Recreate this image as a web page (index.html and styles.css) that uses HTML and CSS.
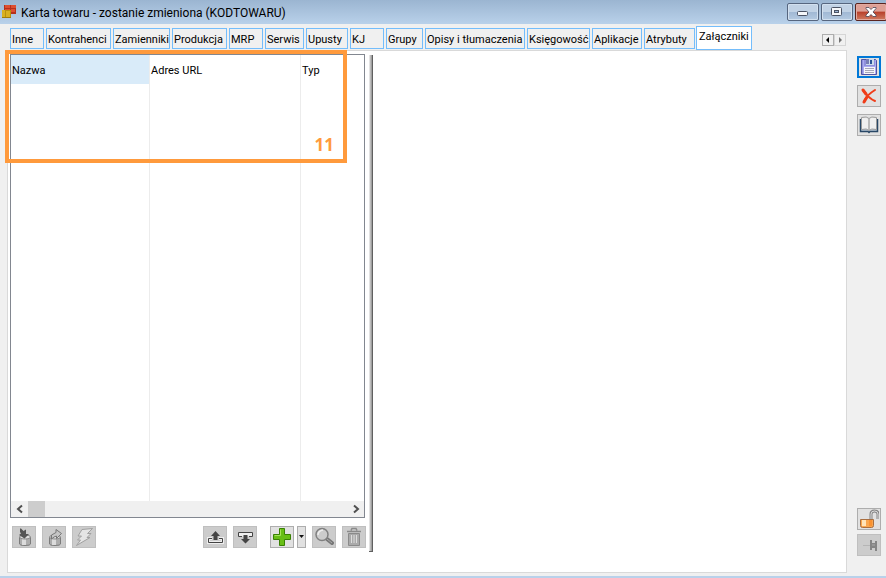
FILE: index.html
```html
<!DOCTYPE html>
<html lang="pl">
<head>
<meta charset="utf-8">
<title>Karta towaru</title>
<link rel="stylesheet" href="styles.css">
</head>
<body>
<div class="window">
  <header class="titlebar">
    <svg class="app-icon" width="16" height="16" viewBox="0 0 16 16" aria-hidden="true">
      <path d="M3 1h12v9H3z" fill="#b5301c"/><path d="M4 1h5v3H4zM10 1h5v3h-5zM4 5h5v3H4zM10 5h4v3h-4z" fill="#de4e30"/>
      <path d="M1 6h9v8H1z" fill="#b8900f"/><path d="M1 6h3v8H1zM5 7h4v7H5z" fill="#d8b020"/><path d="M1 13.500h9" stroke="#a07c08"/>
    </svg>
    <h1 class="title">Karta towaru - zostanie zmieniona (KODTOWARU)</h1>
    <div class="window-buttons">
      <button class="wbtn" aria-label="Minimalizuj"><svg width="12" height="12" viewBox="0 0 12 12"><rect x=".5" y="5.500" width="10" height="4" rx="1" fill="#f5f7fa" stroke="#4b5364"/></svg></button>
      <button class="wbtn" aria-label="Maksymalizuj"><svg width="12" height="12" viewBox="0 0 12 12"><rect x=".5" y="1.500" width="10" height="8" rx="1" fill="#f5f7fa" stroke="#4b5364"/><rect x="3.500" y="4.500" width="4" height="2" fill="#9db5d5" stroke="#4b5364"/></svg></button>
      <button class="wbtn close" aria-label="Zamknij"><svg width="12" height="12" viewBox="0 0 12 12"><path d="M1 1.500h3l2 2 2-2h3v1L8 6l3 3v1.500H8l-2-2-2 2H1V9l3-3-3-3.500z" fill="#fff" stroke="#4b4554" stroke-width=".8"/></svg></button>
    </div>
  </header>
  <div class="workspace">
    <main class="main">
      <div class="tab-row">
        <nav class="tabs" role="tablist">
          <button role="tab" class="tab short">Inne</button>
          <button role="tab" class="tab w-kontrahenci">Kontrahenci</button>
          <button role="tab" class="tab w-zamienniki">Zamienniki</button>
          <button role="tab" class="tab w-produkcja">Produkcja</button>
          <button role="tab" class="tab short">MRP</button>
          <button role="tab" class="tab w-serwis">Serwis</button>
          <button role="tab" class="tab w-upusty">Upusty</button>
          <button role="tab" class="tab short">KJ</button>
          <button role="tab" class="tab w-grupy">Grupy</button>
          <button role="tab" class="tab w-opisy">Opisy i tłumaczenia</button>
          <button role="tab" class="tab w-ksiegowosc">Księgowość</button>
          <button role="tab" class="tab w-aplikacje">Aplikacje</button>
          <button role="tab" class="tab w-atrybuty">Atrybuty</button>
          <button role="tab" class="tab active" aria-selected="true">Załączniki</button>
        </nav>
        <div class="tab-scroll">
          <button class="scroll-tab" aria-label="Poprzednie zakładki"><svg width="10" height="10" viewBox="0 0 10 10"><path d="M6 2v6L3 5z" fill="#000"/></svg></button>
          <button class="scroll-tab end" aria-label="Następne zakładki"><svg width="10" height="10" viewBox="0 0 10 10"><path d="M4 2v6l3-3z" fill="#707070"/></svg></button>
        </div>
      </div>
      <section class="page">
        <div class="left-pane">
          <div class="list">
            <table class="files">
              <colgroup><col class="c-name"><col class="c-url"><col></colgroup>
              <thead><tr><th class="sorted">Nazwa</th><th>Adres URL</th><th>Typ</th></tr></thead>
              <tbody><tr><td></td><td></td><td></td></tr></tbody>
            </table>
            <div class="hscroll">
              <button class="arrow" aria-label="Przewiń w lewo"><svg width="8" height="10" viewBox="0 0 8 10"><path d="M6 1.500L2 5l4 3.500" fill="none" stroke="#505050" stroke-width="2"/></svg></button>
              <div class="thumb"></div>
              <button class="arrow" aria-label="Przewiń w prawo"><svg width="8" height="10" viewBox="0 0 8 10"><path d="M2 1.500L6 5 2 8.500" fill="none" stroke="#505050" stroke-width="2"/></svg></button>
            </div>
          </div>
          <div class="toolbar">
            <div class="group">
              <button class="btn off" aria-label="Importuj"><svg width="20" height="20" viewBox="0 0 20 20"><path d="M5.500 10v7q0 1.500 5.500 1.500t5.500-1.500v-7" fill="#adadad" stroke="#7c7c7c"/><path d="M8 12h4v6H8z" fill="#dcdcdc"/><ellipse cx="11" cy="10" rx="5.500" ry="2" fill="#ddd" stroke="#888"/><path d="M6 1.500h1L9.500 4 12 2.500V7h3l-4.500 4.500L5 8l2-1.500L6 5z" fill="#555"/></svg></button>
              <button class="btn off" aria-label="Eksportuj"><svg width="20" height="20" viewBox="0 0 20 20"><path d="M5.500 10v7q0 1.500 5.500 1.500t5.500-1.500v-7" fill="#adadad" stroke="#7c7c7c"/><path d="M8 12h4v6H8z" fill="#dcdcdc"/><ellipse cx="11" cy="10" rx="5.500" ry="2" fill="#ddd" stroke="#888"/><path d="M7.500 12V8L12 5.500v-3l5.500 4-5 5V9L10 10z" fill="#c5c5c5" stroke="#777"/></svg></button>
              <button class="btn off" aria-label="Wykonaj"><svg width="20" height="20" viewBox="0 0 20 20"><path d="M8 2.500l10.500-1-5 5H17l-4 4h3L2.500 18.500l4-5.500H3.500l4-4H4z" fill="#e4e4e4" stroke="#a0a0a0"/></svg></button>
            </div>
            <div class="group middle">
              <button class="btn off" aria-label="Wyślij"><svg width="20" height="20" viewBox="1 0 20 20"><path d="M8 11.500H4.500v4h14v-4H15" fill="none" stroke="#eee" stroke-width="3"/><path d="M8 11.500H4.500v4h14v-4H15" fill="none" stroke="#444"/><path d="M11.500 4L16 9h-2.500v4h-4V9H7z" fill="#444"/></svg></button>
              <button class="btn off" aria-label="Pobierz"><svg width="20" height="20" viewBox="1 0 20 20"><path d="M8 9.500H4.500v-4h14v4H15" fill="#eee" stroke="#444"/><path d="M11.500 16.500L16 12h-2.500V8h-4v4H7z" fill="#444"/></svg></button>
            </div>
            <div class="group end">
              <button class="btn" aria-label="Dodaj"><svg width="20" height="20" viewBox="1 0 20 20"><path d="M8.500 1.500h5v6h6v5h-6v6h-5v-6h-6v-5h6z" fill="#68be16" stroke="#398004"/><path d="M9.500 2.500v6h-6" fill="none" stroke="#a5e35b"/></svg></button>
              <button class="btn drop" aria-label="Więcej opcji dodawania"><svg width="5" height="4" viewBox="0 0 5 4"><path d="M0 0h5L2.500 3z" fill="#111"/></svg></button>
              <button class="btn off" aria-label="Podgląd"><svg width="20" height="20" viewBox="0 0 20 20"><path d="M13 12l5 4" stroke="#777" stroke-width="4" stroke-linecap="round"/><path d="M13 12l5 4" stroke="#aaa"/><circle cx="8" cy="7.500" r="6" fill="#ccc" stroke="#808080" stroke-width="1.500"/><path d="M4 8q0-4 5-5" fill="none" stroke="#eee" stroke-width="1.500"/></svg></button>
              <button class="btn off" aria-label="Usuń"><svg width="20" height="20" viewBox="1 0 20 20"><path d="M5.500 6.500h11v12h-11z" fill="#aaa" stroke="#8a8a8a"/><path d="M8.500 8v8M11 8v8M13.500 8v8" stroke="#ddd"/><path d="M4 4.500h14M8 3.500l1-2h4l1 2" fill="none" stroke="#8a8a8a" stroke-width="1.500"/></svg></button>
            </div>
          </div>
        </div>
        <div class="splitter"></div>
        <div class="preview"></div>
        <div class="marker"><span>11</span></div>
      </section>
    </main>
    <aside class="side">
      <button class="btn focus" aria-label="Zapisz"><svg width="20" height="20" viewBox="0 0 20 20"><path d="M2.500 2.500h14l1 1v14h-15z" fill="#9090dc" stroke="#5054a4"/><path d="M4 3h1v6h11V3h1v14H4z" fill="#aaaaf0"/><path d="M7 2h8v6H7z" fill="#cbdbea"/><path d="M7 2h3v5H7z" fill="#777db5"/><path d="M11 3h2v4h-2z" fill="#285398"/><path d="M5 10h11v7H5z" fill="#f5f5fa"/><path d="M6 11.500h9M6 13.500h9M6 15.500h9" stroke="#a6a6b8"/></svg></button>
      <button class="btn" aria-label="Anuluj"><svg width="20" height="20" viewBox="1 0 20 20"><path d="M5 4c2 3 7 9 12 11M17 4C12 7 7 12 6 16" fill="none" stroke="#f03c18" stroke-width="2" stroke-linecap="round"/><path d="M5 4l3 4M6 16l3-5" stroke="#f03c18" stroke-width="3" stroke-linecap="round"/></svg></button>
      <button class="btn" aria-label="Pomoc"><svg width="20" height="20" viewBox="0 0 20 20"><path d="M1.500 4v12.500H9l1 1 1-1h7.500V4" fill="#b8c8d8" stroke="#284766" stroke-width="1.500"/><path d="M2.500 2.500Q8 1 10 3.500q2-2.500 7.500-1v12Q12 13 10 15.500 8 13 2.500 14.500z" fill="#efefef" stroke="#999"/><path d="M10 3v12" stroke="#aaa" stroke-width="1.500"/></svg></button>
      <button class="btn lock" aria-label="Odblokuj"><svg width="20" height="20" viewBox="0 0 20 20"><path d="M12 11V5q0-3 3.500-3T19 5v5" fill="none" stroke="#858585" stroke-width="3"/><path d="M12 11V5q0-3 3.500-3T19 5v5" fill="none" stroke="#ddd"/><path d="M1.500 10.500h13v6q0 2-2 2h-9q-2 0-2-2z" fill="#f9a64e" stroke="#a86e40"/><path d="M3 11h4v6H3z" fill="#ffe3b8"/><path d="M10 11h3v6h-3z" fill="#fa9230"/></svg></button>
      <button class="btn off" aria-label="Przypnij"><svg width="20" height="20" viewBox="0 0 20 20"><path d="M4 10.500h7" stroke="#b5b5b5"/><path d="M11 5h2v3h3V6h2v10h-2v-3h-3v2h-2z" fill="#858585"/><path d="M13 10h3" stroke="#aaa"/></svg></button>
    </aside>
  </div>
</div>
</body>
</html>
```
FILE: styles.css
```css
* { box-sizing: border-box; }
body { margin: 0; background: #f0f0f0; color: #000; font-family: Roboto, "Liberation Sans", sans-serif; font-size: 11px; }
button { margin: 0; padding: 0; font: inherit; color: inherit; border-radius: 0; }
svg { display: block; flex: none; }
.window { display: flex; flex-direction: column; min-height: 100vh; border-bottom: 2px solid #b9d1ea; }
.titlebar { display: flex; align-items: center; gap: 4px; height: 24px; padding-left: 1px; background: linear-gradient(#9bb5d1, #b9d1ea); overflow: hidden; }
.title { flex: 1; margin: 0; padding-top: 2px; font-size: 12px; line-height: 18px; font-weight: normal; white-space: nowrap; }
.window-buttons { display: flex; gap: 2px; margin-right: -1px; }
.wbtn { display: flex; align-items: center; justify-content: center; width: 32px; height: 18px; border: 1px solid #56667f; border-radius: 2px; background: linear-gradient(#c1d2e5 50%, #a0b8d4 50%, #b4cae1); box-shadow: inset 0 0 0 1px #d2e0ef; }
.wbtn.close { border-color: #5a2520; background: linear-gradient(#dea096 45%, #b8402b 50%, #d07c62); box-shadow: inset 0 0 0 1px #e2aaa0; }
.workspace { display: flex; flex: 1; padding: 0 5px 3px 7px; }
.main { display: flex; flex: 1; flex-direction: column; min-width: 0; }
.tab-row { display: flex; justify-content: space-between; align-items: flex-end; height: 26px; }
.tabs { display: flex; align-items: flex-end; gap: 2px; padding-left: 3px; }
.tab { flex: none; height: 21px; margin-bottom: 1px; padding: 1px 0 0 1px; border: 1px solid #74bdfb; background: #f0f0f0; text-align: left; white-space: nowrap; }
.short { width: 34px; }
.w-kontrahenci { width: 65px; }
.w-zamienniki { width: 57px; }
.w-produkcja { width: 55px; }
.w-serwis { width: 39px; }
.w-upusty { width: 42px; }
.w-grupy { width: 37px; }
.w-opisy { width: 100px; }
.w-ksiegowosc { width: 63px; }
.w-aplikacje { width: 50px; }
.w-atrybuty { width: 51px; }
.tab.active { width: 56px; height: 24px; margin: 0 0 0 -1px; padding: 0 0 3px 2px; background: #fff; }
.tab-scroll { display: flex; margin-bottom: 4px; padding-right: 1px; }
.scroll-tab { display: flex; align-items: center; justify-content: center; width: 12px; height: 12px; border: 1px solid #adadad; background: #f0f0f0; }
.scroll-tab.end { border-color: #d5d5d5; }
.page { position: relative; display: flex; flex: 1; padding: 3px 2px 20px; border: 1px solid #d9d9d9; background: #fff; }
.left-pane { display: flex; flex: none; flex-direction: column; width: 355px; }
.list { display: flex; flex: 1; flex-direction: column; border: 1px solid #828790; }
.files { flex: 1; width: 100%; height: 100%; border-collapse: separate; border-spacing: 0; table-layout: fixed; }
.c-name { width: 139px; }
.c-url { width: 151px; }
.files th { height: 29px; padding: 2px 0 0 1px; font-weight: normal; text-align: left; }
.files th, .files td { border-right: 1px solid #ececec; }
.files th:last-child, .files td:last-child { border-right: 0; }
.files .sorted { background: #d9ebf9; }
.hscroll { display: flex; height: 16px; background: #f0f0f0; }
.arrow { display: flex; align-items: center; justify-content: center; width: 17px; border: 0; background: none; }
.thumb { width: 17px; margin-right: auto; background: #cdcdcd; }
.toolbar { display: flex; margin-right: -1px; padding: 8px 0 4px 2px; }
.group { display: flex; gap: 6px; }
.group.middle { margin-left: auto; }
.group.end { margin-left: 13px; }
.btn { display: flex; flex: none; align-items: center; justify-content: center; width: 24px; height: 22px; border: 1px solid #adadad; background: #e1e1e1; }
.btn.off { border-color: #bfbfbf; background: #ccc; }
.btn.drop { width: 9px; margin-left: -3px; }
.btn.focus { border: 2px solid #0078d7; }
.splitter { width: 4px; margin: 1px 0 0 4px; border-bottom: 1px solid #606060; background: linear-gradient(90deg, #e2e2e2 25%, #bcbcbc 25%, #bcbcbc 50%, #a0a0a0 50%, #a0a0a0 75%, #606060 75%); }
.preview { flex: 1; }
.marker { position: absolute; top: -1px; left: -3px; display: flex; align-items: flex-end; justify-content: flex-end; width: 342px; height: 113px; padding: 0 9px 2px; border: 4px solid #ff9a3c; color: #ff9a3c; font: bold 17px/24px "Open Sans", sans-serif; pointer-events: none; }
.side { display: flex; flex-direction: column; gap: 7px; padding: 32px 0 17px; margin-left: 10px; }
.side .lock { margin-top: auto; margin-bottom: -3px; }
```
